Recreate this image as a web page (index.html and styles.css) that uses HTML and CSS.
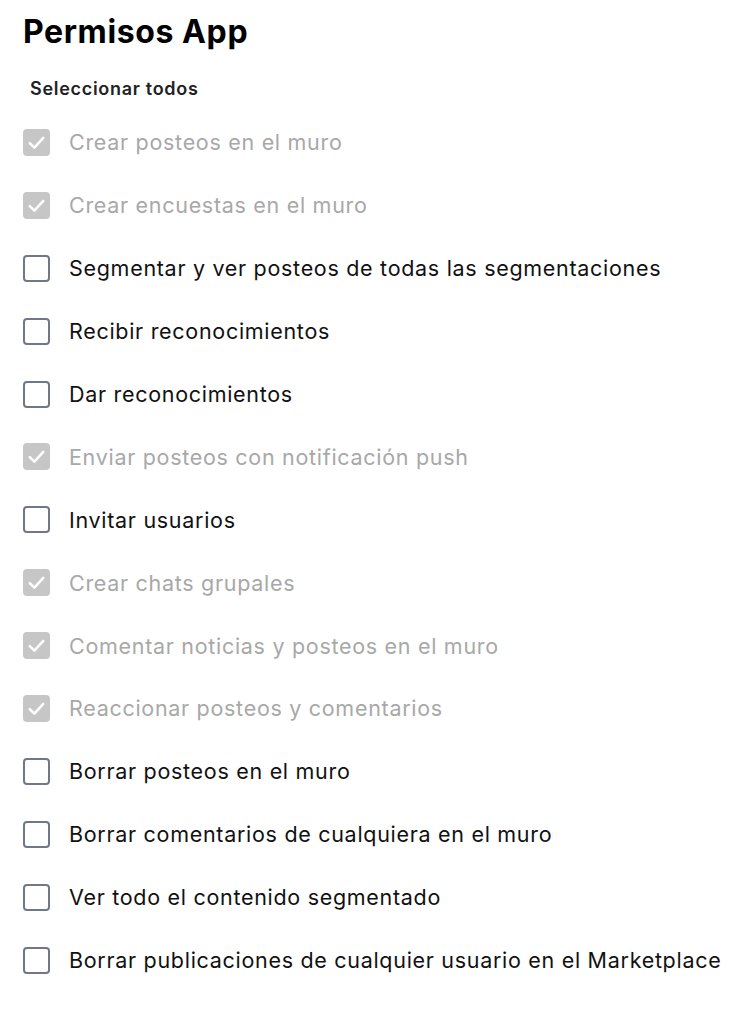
FILE: index.html
```html
<!DOCTYPE html>
<html lang="es">
<head>
    <meta charset="UTF-8">
    <meta name="viewport" content="width=device-width, initial-scale=1.0">
    <title>Permisos App</title>
    <link rel="stylesheet" href="styles.css">
</head>
<body>
    <div class="container">
        <h1>Permisos App</h1>
        <div class="select-all">Seleccionar todos</div>

        <ul class="permissions">
            <li class="permission disabled"><span class="box checked"><svg viewBox="0 0 26 26"><path d="M6.5 13.5l4.5 4.5 8.5-9.5"/></svg></span>Crear posteos en el muro</li>
            <li class="permission disabled"><span class="box checked"><svg viewBox="0 0 26 26"><path d="M6.5 13.5l4.5 4.5 8.5-9.5"/></svg></span>Crear encuestas en el muro</li>
            <li class="permission"><span class="box"></span>Segmentar y ver posteos de todas las segmentaciones</li>
            <li class="permission"><span class="box"></span>Recibir reconocimientos</li>
            <li class="permission"><span class="box"></span>Dar reconocimientos</li>
            <li class="permission disabled"><span class="box checked"><svg viewBox="0 0 26 26"><path d="M6.5 13.5l4.5 4.5 8.5-9.5"/></svg></span>Enviar posteos con notificación push</li>
            <li class="permission"><span class="box"></span>Invitar usuarios</li>
            <li class="permission disabled"><span class="box checked"><svg viewBox="0 0 26 26"><path d="M6.5 13.5l4.5 4.5 8.5-9.5"/></svg></span>Crear chats grupales</li>
            <li class="permission disabled"><span class="box checked"><svg viewBox="0 0 26 26"><path d="M6.5 13.5l4.5 4.5 8.5-9.5"/></svg></span>Comentar noticias y posteos en el muro</li>
            <li class="permission disabled"><span class="box checked"><svg viewBox="0 0 26 26"><path d="M6.5 13.5l4.5 4.5 8.5-9.5"/></svg></span>Reaccionar posteos y comentarios</li>
            <li class="permission"><span class="box"></span>Borrar posteos en el muro</li>
            <li class="permission"><span class="box"></span>Borrar comentarios de cualquiera en el muro</li>
            <li class="permission"><span class="box"></span>Ver todo el contenido segmentado</li>
            <li class="permission"><span class="box"></span>Borrar publicaciones de cualquier usuario en el Marketplace</li>
        </ul>
    </div>
</body>
</html>
```

FILE: styles.css
```css
body {
    margin: 0;
    background: #fff;
    font-family: Inter, "Noto Sans", sans-serif;
    color: #000;
}
.container {
    padding: 12px 0 0 23px;
}
h1 {
    margin: 0;
    font-size: 32px;
    line-height: 40px;
    font-weight: 700;
    letter-spacing: 0.6px;
}
.select-all {
    margin: 26px 0 0 7px;
    font-size: 18px;
    line-height: 22px;
    font-weight: 600;
    letter-spacing: 0.7px;
    color: #222;
}
.permissions {
    list-style: none;
    margin: 11px 0 0 0;
    padding: 0;
}
.permission {
    display: flex;
    align-items: center;
    gap: 19px;
    height: 62.9px;
    font-size: 21.5px;
    letter-spacing: 0.7px;
    color: #111;
}
.permission.disabled {
    color: #a8a8a8;
}
.box {
    flex: none;
    width: 27px;
    height: 27px;
    box-sizing: border-box;
    border: 2.5px solid #6f7788;
    border-radius: 4px;
}
.box.checked {
    border: none;
    background: #c6c6c6;
}
.box svg {
    display: block;
    width: 27px;
    height: 27px;
}
.box svg path {
    fill: none;
    stroke: #fff;
    stroke-width: 2.4;
    stroke-linecap: round;
    stroke-linejoin: round;
}
```
